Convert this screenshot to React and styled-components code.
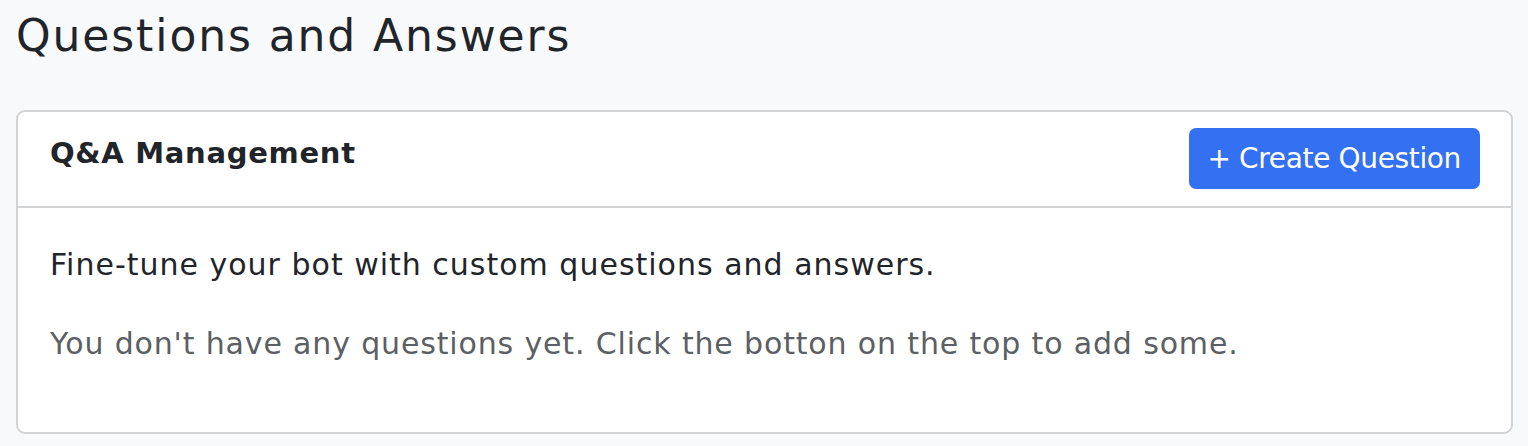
import React from "react";
import styled, { createGlobalStyle } from "styled-components";

const Global = createGlobalStyle`
  html, body { margin: 0; padding: 0; background: #f8f9fa; }
  body { font-family: "DejaVu Sans", "Noto Sans", sans-serif; color: #212529; }
`;

const Page = styled.main`
  padding: 8px 15px 12px 16px;
  display: flex;
  flex-direction: column;
  gap: 46px;
`;

const Title = styled.h1`
  margin: 0;
  font-size: 44px;
  line-height: 56px;
  font-weight: 400;
  letter-spacing: 1.9px;
  color: #212529;
`;

const Card = styled.section`
  background: #fff;
  border: 2px solid #d3d4d6;
  border-radius: 9px;
  display: flex;
  flex-direction: column;
`;

const CardHeader = styled.header`
  display: flex;
  justify-content: space-between;
  align-items: flex-start;
  padding: 16px 31px 17px 32px;
  border-bottom: 2px solid #d3d4d6;
`;

const CardTitle = styled.h2`
  margin: 0;
  padding-top: 5px;
  font-size: 29px;
  line-height: 40px;
  font-weight: 700;
  letter-spacing: 0.7px;
  color: #212529;
`;

const PrimaryButton = styled.button`
  height: 61px;
  padding: 0 19px 0 18px;
  border: none;
  border-radius: 7px;
  background: #3470f2;
  color: #fff;
  font-family: inherit;
  font-size: 28px;
  font-weight: 400;
  letter-spacing: -0.35px;
  cursor: pointer;
`;

const CardBody = styled.div`
  padding: 37px 32px 68px;
  display: flex;
  flex-direction: column;
  gap: 39px;
`;

const Text = styled.p`
  margin: 0;
  font-size: 30px;
  line-height: 40px;
  letter-spacing: ${(p) => (p.$muted ? "0.85px" : "1px")};
  color: ${(p) => (p.$muted ? "#5c5f63" : "#212529")};
`;

export default function App() {
  return (
    <>
      <Global />
      <Page>
        <Title>Questions and Answers</Title>
        <Card>
          <CardHeader>
            <CardTitle>Q&amp;A Management</CardTitle>
            <PrimaryButton>+ Create Question</PrimaryButton>
          </CardHeader>
          <CardBody>
            <Text>Fine-tune your bot with custom questions and answers.</Text>
            <Text $muted>
              You don't have any questions yet. Click the botton on the top to add some.
            </Text>
          </CardBody>
        </Card>
      </Page>
    </>
  );
}
